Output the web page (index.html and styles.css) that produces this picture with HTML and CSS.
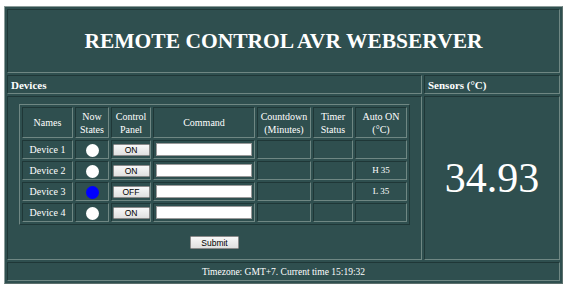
FILE: index.html
```html
<!DOCTYPE html>
<html>
<head>
<meta charset="utf-8">
<link rel="stylesheet" href="styles.css">
</head>
<body>
<table class="frame">
  <tr>
    <td colspan="2" class="title-cell"><h1 class="title">REMOTE CONTROL AVR WEBSERVER</h1></td>
  </tr>
  <tr>
    <td class="sec-head devices-head">Devices</td>
    <td class="sec-head sensors-head">Sensors (°C)</td>
  </tr>
  <tr>
    <td class="devices-body">
      <table class="grid">
        <tr class="hrow">
          <th class="c-name">Names</th>
          <th class="c-state">Now States</th>
          <th class="c-ctrl">Control Panel</th>
          <th class="c-cmd">Command</th>
          <th class="c-count">Countdown (Minutes)</th>
          <th class="c-timer">Timer Status</th>
          <th class="c-auto">Auto ON (°C)</th>
        </tr>
        <tr class="drow">
          <td>Device 1</td>
          <td><span class="dot"></span></td>
          <td><button class="btn">ON</button></td>
          <td><input class="cmd" type="text"></td>
          <td></td><td></td><td></td>
        </tr>
        <tr class="drow">
          <td>Device 2</td>
          <td><span class="dot"></span></td>
          <td><button class="btn">ON</button></td>
          <td><input class="cmd" type="text"></td>
          <td></td><td></td><td class="auto">H 35</td>
        </tr>
        <tr class="drow">
          <td>Device 3</td>
          <td><span class="dot on"></span></td>
          <td><button class="btn">OFF</button></td>
          <td><input class="cmd" type="text"></td>
          <td></td><td></td><td class="auto">L 35</td>
        </tr>
        <tr class="drow">
          <td>Device 4</td>
          <td><span class="dot"></span></td>
          <td><button class="btn">ON</button></td>
          <td><input class="cmd" type="text"></td>
          <td></td><td></td><td></td>
        </tr>
      </table>
      <div class="submit-wrap"><button class="btn submit">Submit</button></div>
    </td>
    <td class="sensor-body"><span class="temp">34.93</span></td>
  </tr>
  <tr>
    <td colspan="2" class="footer">Timezone: GMT+7. Current time 15:19:32</td>
  </tr>
</table>
</body>
</html>
```

FILE: styles.css
```css
html, body {
  margin: 0;
  padding: 0;
  background: #ffffff;
}

body {
  font-family: "Liberation Serif", "Times New Roman", serif;
  color: #ffffff;
  padding: 6px 0 0 4px;
}

.frame {
  width: 559px;
  border-collapse: separate;
  border-spacing: 2px;
  background: #2f4f4f;
  border: 1px solid;
  border-color: #8c9c9a #5b6f6c #5b6f6c #8c9c9a;
}

.frame > tbody > tr > td {
  border: 1px solid;
  border-color: #1f3737 #6f8783 #6f8783 #1f3737;
  padding: 0;
}

.title-cell {
  height: 62px;
  text-align: center;
  vertical-align: middle;
}

.title {
  margin: 0;
  font-size: 21.5px;
  font-weight: bold;
}

.sec-head {
  height: 17px;
  font-size: 11px;
  font-weight: bold;
  vertical-align: middle;
  padding-left: 3px !important;
}

.devices-head {
  width: 410px;
}

.devices-body {
  vertical-align: top;
  padding: 7px 0 10px 0 !important;
}

.grid {
  margin: 0 auto;
  table-layout: fixed;
  width: 390px;
  border-collapse: separate;
  border-spacing: 2px;
  border: 1px solid;
  border-color: #6f8783 #1f3737 #1f3737 #6f8783;
}

.grid th,
.grid td {
  border: 1px solid;
  border-color: #1f3737 #6f8783 #6f8783 #1f3737;
  padding: 0;
  text-align: center;
  vertical-align: middle;
  font-size: 10px;
  font-weight: normal;
  line-height: 13px;
}

.hrow th {
  height: 29px;
}

.drow td {
  height: 17px;
}

.c-name { width: 49px; }
.c-state { width: 32px; }
.c-ctrl { width: 38px; }
.c-cmd { width: 100px; }
.c-count { width: 52px; }
.c-timer { width: 38px; }
.c-auto { width: 50px; }

.dot {
  display: inline-block;
  width: 13px;
  height: 13px;
  border-radius: 50%;
  background: #ffffff;
  vertical-align: middle;
}

.dot.on {
  background: #0000ff;
}

.btn {
  font-family: "Liberation Sans", Arial, sans-serif;
  font-size: 8.5px;
  font-weight: normal;
  color: #000000;
  width: 37px;
  height: 12px;
  padding: 0;
  margin: 0;
  line-height: 10px;
  border: 1px solid #8a8a8a;
  border-radius: 1px;
  background: linear-gradient(#f8f8f8, #e0e0e0);
  vertical-align: middle;
}

.cmd {
  display: block;
  width: 96px;
  height: 13px;
  margin: 0 auto;
  padding: 0;
  border: 1px solid #9a9a9a;
  background: #ffffff;
  box-sizing: border-box;
}

.auto {
  font-size: 9px !important;
}

.submit-wrap {
  text-align: center;
  padding-top: 11px;
  line-height: 13px;
  height: 13px;
}

.submit {
  width: 49px;
  height: 13px;
  display: inline-block;
  vertical-align: top;
}

.sensor-body {
  text-align: center;
  vertical-align: middle;
}

.temp {
  font-size: 42px;
}

.footer {
  height: 17px;
  text-align: center;
  font-size: 9.5px;
  vertical-align: middle;
}
```
